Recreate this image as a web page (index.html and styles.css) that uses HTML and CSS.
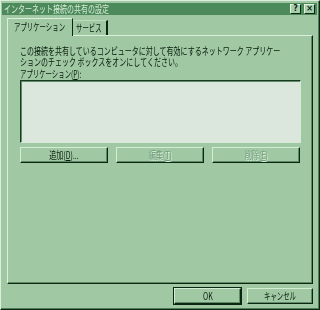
FILE: index.html
```html
<!DOCTYPE html>
<html lang="ja">
<head>
<meta charset="utf-8">
<link rel="stylesheet" href="styles.css">
</head>
<body>
<div class="win">
  <div class="title">
    <span class="t">インターネット接続の共有の設定</span>
    <div class="tbtns"><span class="tb">?</span><span class="tb">×</span></div>
  </div>
  <div class="tabs">
    <div class="tab active"><span class="t k">アプリケーション</span></div>
    <div class="tab"><span class="t k">サービス</span></div>
  </div>
  <div class="panel">
    <div class="desc">
      <span class="t">この接続を共有しているコンピュータに対して有効にするネットワーク アプリケー</span>
      <span class="t">ションのチェック ボックスをオンにしてください。</span>
    </div>
    <div class="label"><span class="t k">アプリケーション(<u>P</u>):</span></div>
    <div class="list"></div>
    <div class="btnrow">
      <div class="btn"><span class="t c">追加(<u>D</u>)...</span></div>
      <div class="btn dis"><span class="t c">編集(<u>T</u>)</span></div>
      <div class="btn dis"><span class="t c">削除(<u>E</u>)</span></div>
    </div>
  </div>
  <div class="footer">
    <div class="btn ok"><span class="t c">OK</span></div>
    <div class="btn cancel"><span class="t c k">キャンセル</span></div>
  </div>
</div>
</body>
</html>
```
FILE: styles.css
```css
html, body {
  margin: 0;
  padding: 0;
}
body {
  width: 320px;
  height: 310px;
  overflow: hidden;
  background: #9fc8a3;
  font-family: "Noto Sans CJK JP", "Noto Sans", sans-serif;
  font-size: 10px;
  color: #0a1c0e;
}
.win {
  box-sizing: border-box;
  width: 320px;
  height: 310px;
  border: 1px solid;
  border-color: #dcefdc #0c2612 #0c2612 #dcefdc;
  box-shadow: inset -1px -1px 0 #4f7e5a;
  padding: 2px 2px 0 1px;
  display: flex;
  flex-direction: column;
  background: #9fc8a3;
}
.t {
  display: inline-block;
  white-space: nowrap;
  transform: scaleX(0.7);
  transform-origin: 0 50%;
}
.t.k {
  transform: scaleX(0.64);
}
.t.c {
  transform-origin: 50% 50%;
}
.title {
  height: 12px;
  background: #4c8a5b;
  color: #d6ecd6;
  display: flex;
  align-items: center;
  justify-content: space-between;
  padding: 0 2px 0 2px;
  line-height: 12px;
}
.tbtns {
  display: flex;
  gap: 3px;
}
.tb {
  box-sizing: border-box;
  width: 11px;
  height: 10px;
  background: #a8cfac;
  border: 1px solid;
  border-color: #e4f4e4 #0c2612 #0c2612 #e4f4e4;
  color: #0c2612;
  font-family: "DejaVu Sans", sans-serif;
  font-weight: bold;
  font-size: 8px;
  line-height: 8px;
  text-align: center;
}
.tabs {
  display: flex;
  padding-left: 5px;
  margin-top: 2px;
  height: 18px;
  align-items: flex-end;
  position: relative;
  z-index: 1;
}
.tab {
  box-sizing: border-box;
  height: 15px;
  padding: 0 4px;
  line-height: 14px;
  border-top: 1px solid #dcefdc;
  border-left: 1px solid #dcefdc;
  border-right: 2px solid #0c2612;
}
.tab.active {
  height: 18px;
  width: 66px;
  margin-bottom: -1px;
  background: #9fc8a3;
  padding-left: 6px;
  line-height: 16px;
  border-right: 1px solid #0c2612;
}
.tab:not(.active) {
  width: 35px;
  border-left: none;
  border-top-color: #b8dcbc;
  padding-left: 3px;
}
.panel {
  box-sizing: border-box;
  margin-left: 5px;
  width: 306px;
  height: 249px;
  border: 1px solid;
  border-color: #dcefdc #0c2612 #0c2612 #dcefdc;
  box-shadow: inset -1px -1px 0 #5d8c68;
  padding: 9px 0 0 12px;
}
.desc {
  display: flex;
  flex-direction: column;
  line-height: 11px;
}
.label {
  margin-top: 1px;
  line-height: 11px;
  height: 11px;
}
.list {
  box-sizing: border-box;
  margin-top: 1px;
  width: 281px;
  height: 63px;
  background: #dbe7dd;
  border: 1px solid;
  border-color: #1a3a22 #d6ead8 #d6ead8 #1a3a22;
  box-shadow: inset 1px 1px 0 #5d8c68;
}
.btnrow {
  display: flex;
  gap: 8px;
  margin-top: 4px;
}
.btn {
  box-sizing: border-box;
  height: 16px;
  width: 88px;
  border: 1px solid;
  border-color: #d4eed6 #0c2612 #0c2612 #d4eed6;
  box-shadow: inset -1px -1px 0 #5d8c68;
  display: flex;
  align-items: center;
  justify-content: center;
  line-height: 14px;
}
.btn.dis {
  color: #6f9a7a;
  text-shadow: 1px 1px 0 #e0f2e0;
}
.footer {
  display: flex;
  justify-content: flex-end;
  gap: 6px;
  margin-top: 4px;
  padding-right: 4px;
}
.btn.ok {
  width: 67px;
  outline: 1px solid #0c2612;
}
.btn.cancel {
  width: 66px;
}
```
